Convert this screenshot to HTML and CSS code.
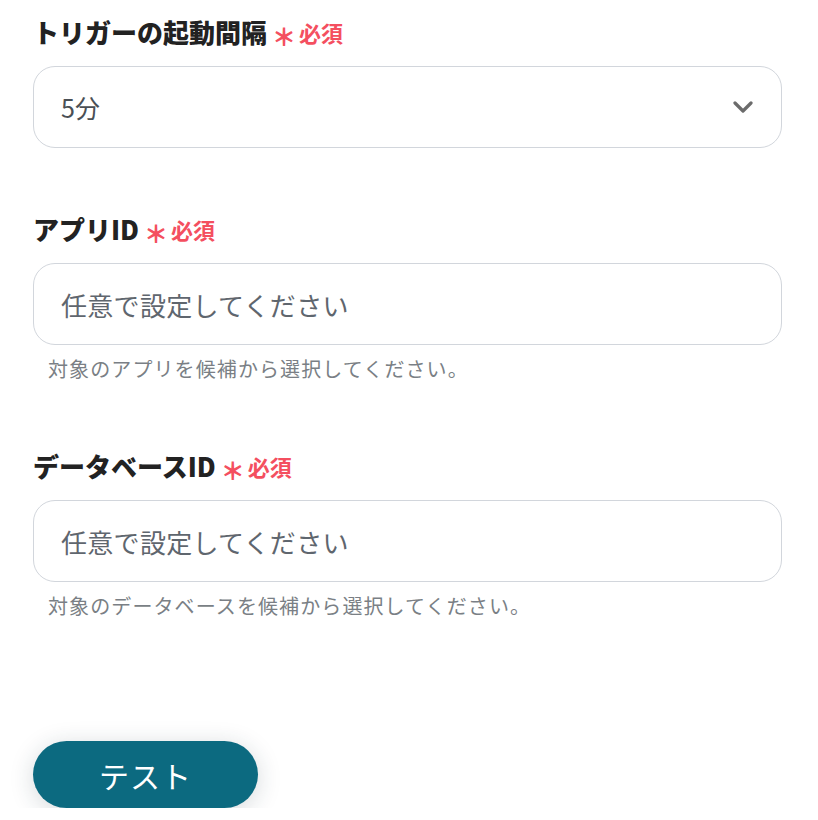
FILE: index.html
```html
<!DOCTYPE html>
<html lang="ja">
<head>
  <meta charset="UTF-8">
  <meta name="viewport" content="width=device-width, initial-scale=1.0">
  <title>トリガー設定</title>
  <link rel="stylesheet" href="styles.css">
</head>
<body>
  <form class="settings">
    <div class="field">
      <label class="field-label">トリガーの起動間隔<span class="required"><span class="mark">＊</span>必須</span></label>
      <div class="select-box">
        <span class="select-value">5分</span>
        <svg class="chevron" width="20" height="12" viewBox="0 0 20 12">
          <polyline points="2,2 10,10 18,2" fill="none" stroke="#6b6b6b" stroke-width="3.2" stroke-linecap="round" stroke-linejoin="round"/>
        </svg>
      </div>
    </div>

    <div class="field">
      <label class="field-label">アプリID<span class="required"><span class="mark">＊</span>必須</span></label>
      <input class="text-input" type="text" placeholder="任意で設定してください">
      <p class="help">対象のアプリを候補から選択してください。</p>
    </div>

    <div class="field">
      <label class="field-label">データベースID<span class="required"><span class="mark">＊</span>必須</span></label>
      <input class="text-input" type="text" placeholder="任意で設定してください">
      <p class="help">対象のデータベースを候補から選択してください。</p>
    </div>

    <button class="test-btn" type="button">テスト</button>
  </form>
</body>
</html>
```

FILE: styles.css
```css
body {
  margin: 0;
  background: #fff;
  font-family: "Noto Sans CJK JP", "Noto Sans", sans-serif;
  color: #222;
}

.settings {
  padding: 14px 36px 0 33px;
  display: flex;
  flex-direction: column;
  gap: 63px;
}

.field {
  display: flex;
  flex-direction: column;
}

.field-label {
  font-size: 26px;
  font-weight: 900;
  line-height: 36px;
  margin-bottom: 16px;
  color: #222;
  display: flex;
  align-items: center;
}

.required {
  display: inline-flex;
  align-items: center;
  color: #f44f5f;
  font-size: 22px;
  font-weight: bold;
  margin-left: 5px;
}

.required .mark {
  font-size: 24px;
  font-weight: 900;
  margin-right: 3px;
  position: relative;
  top: 4px;
}

.select-box {
  height: 82px;
  box-sizing: border-box;
  border: 1px solid #d2d6dc;
  border-radius: 22px;
  display: flex;
  align-items: center;
  justify-content: space-between;
  padding: 0 28px 0 27px;
}

.select-value {
  font-size: 25px;
  color: #4a4f55;
}

.chevron {
  display: block;
}

.text-input {
  height: 82px;
  box-sizing: border-box;
  border: 1px solid #d2d6dc;
  border-radius: 22px;
  padding: 0 27px;
  font-family: inherit;
  font-size: 26px;
  letter-spacing: 0.3px;
  color: #333;
  outline: none;
}

.text-input::placeholder {
  color: #5f666e;
}

.help {
  margin: 11px 0 3px 15px;
  font-size: 20px;
  line-height: 26px;
  letter-spacing: 1.1px;
  color: #7a7f85;
}

.test-btn {
  align-self: flex-start;
  margin-top: 56px;
  width: 225px;
  height: 67px;
  border: none;
  border-radius: 34px;
  background: #0c6a80;
  color: #fff;
  font-family: inherit;
  font-size: 30px;
  letter-spacing: 1px;
  box-shadow: 0 4px 24px rgba(30, 50, 60, 0.18);
  cursor: pointer;
}
```
